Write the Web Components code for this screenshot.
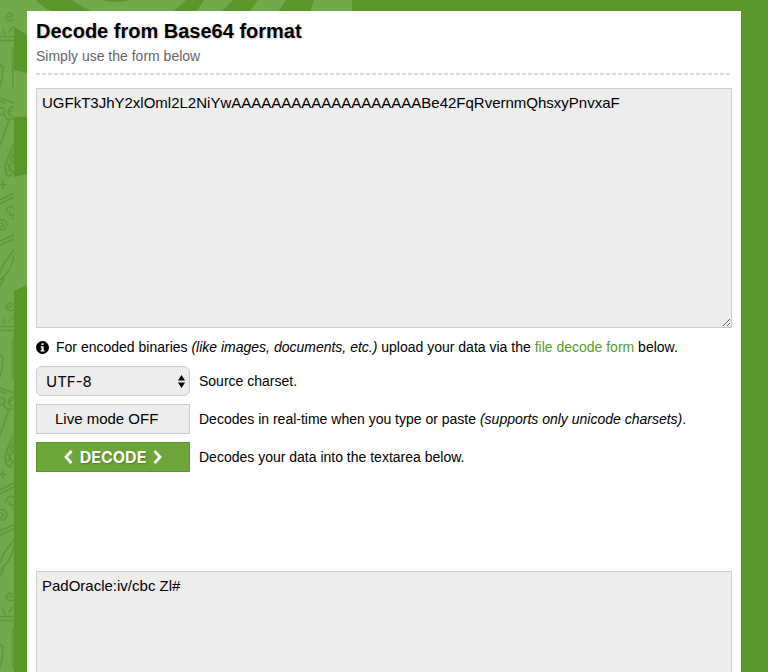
<!DOCTYPE html>
<html lang="en">
<head>
  <meta charset="UTF-8">
  <meta name="viewport" content="width=device-width, initial-scale=1.0">
  <title>Decode from Base64 format</title>
  <style>
    body {
      margin: 0;
      background: #5a962a;
      color: #000;
      font: 14px/18px "Liberation Sans", Arial, sans-serif;
    }
  </style>
</head>
<body>
  <page-shell>
    <decode-header title="Decode from Base64 format" subtitle="Simply use the form below"></decode-header>
    <text-box name="input" label="Data to decode" value="UGFkT3JhY2xlOml2L2NiYwAAAAAAAAAAAAAAAAAAABe42FqRvernmQhsxyPnvxaF"></text-box>
    <info-note>For encoded binaries <i>(like images, documents, etc.)</i> upload your data via the <a slot="link" href="#file">file decode form</a></info-note>
    <decode-options></decode-options>
    <text-box name="output" label="Decoded data" value="PadOracle:iv/cbc Zl#"></text-box>
  </page-shell>

  <script>
    class BackgroundArt extends HTMLElement {
      constructor() {
        super();
        this.attachShadow({mode: 'open'});
      }
      connectedCallback() {
        this.shadowRoot.innerHTML = `
          <style>
            :host { position: absolute; inset: 0; overflow: hidden; z-index: -1; }
            svg { display: block; width: 100%; height: 100%; }
          </style>
          <svg aria-hidden="true">
            <defs>
              <pattern id="doodles" width="14" height="290" patternUnits="userSpaceOnUse">
                <rect width="14" height="290" fill="#73a84d"/>
                <g fill="none" stroke="#61993a" stroke-width="1.7" stroke-linecap="round">
                  <path d="M13 20C8 22 5 18 7 15s7-2 5 1l-3 1M3 29l2 5M13 27l-4 5M0 36.500h14M0 40.500h14M12.700 48v40"/>
                  <path d="M0 65l3 2-1 12-2 8M0 98l14 5M0 101l5 2M14 107c-6-1-8 8-2 9M12 110l-3 2M0 108c5-1 6 4 3 6l-3 1M3 114l4 5h7"/>
                  <path d="M9 120L0 145M13 145l-5 12-3 10 1 7 4 3 3-5-4-5 4-4-3-5 4-4M8 164l3 5-4 2"/>
                  <path d="M3 181v7M0 184.500h6M0 200l14-7M0 204l14-7M6 212c1-8 10-7 9 0-1 5-7 4-5 0M0 220c8-3 9 10 2 10l-2-1M1 223c4 1 2 4 0 4M13 218v1M0 241l14-6M0 245l14-6"/>
                  <path d="M14 250L4 263l-4 10M14 255c-1 9-5 18-14 25M0 286l4-8"/>
                </g>
                <path d="M10 151l4-5v17l-3-1-3 3z" fill="#61993a" opacity=".5"/>
              </pattern>
            </defs>
            <g fill="#73a84d">
              <path d="M0 0h36q8 10 27 15H27v20L14 27H0z"/>
              <path d="M14 70l13 3v44H14zM14 177l13-3v111l-13 6z"/>
              <path d="M72 0q10 8 30 15h65q12-7 19-15zM204 0h29l-15 15h-24zM258 0h28l-10 15h-29zM314 0h38v15h-43z"/>
            </g>
            <path d="M101 0h30q-15 4-30 0z" fill="#5a962a"/>
            <rect width="14" height="100%" fill="url(#doodles)"/>
          </svg>
        `;
      }
    }

    class PageShell extends HTMLElement {
      constructor() {
        super();
        this.attachShadow({mode: 'open'});
      }
      connectedCallback() {
        this.shadowRoot.innerHTML = `
          <style>
            :host { display: block; position: relative; isolation: isolate; padding: 11px 27px 0; }
            main { background: #fff; padding: 7px 9px; }
          </style>
          <background-art></background-art>
          <main><slot></slot></main>
        `;
      }
    }

    class DecodeHeader extends HTMLElement {
      constructor() {
        super();
        this.attachShadow({mode: 'open'});
      }
      connectedCallback() {
        this.shadowRoot.innerHTML = `
          <style>
            :host { display: block; margin-bottom: 13px; }
            h1 { margin: 0; font-size: 20px; line-height: 26px; text-shadow: 1px 1px 2px #ccc; }
            p { margin: 3px 0 8px; color: #666; }
            hr { margin: 0; border: 0; height: 2px;
              background: repeating-linear-gradient(90deg, #ddd 0 4px, transparent 4px 6px); }
          </style>
          <h1>${this.getAttribute('title')}</h1>
          <p>${this.getAttribute('subtitle')}</p>
          <hr>
        `;
      }
    }

    class TextBox extends HTMLElement {
      constructor() {
        super();
        this.attachShadow({mode: 'open'});
      }
      connectedCallback() {
        this.shadowRoot.innerHTML = `
          <style>
            :host { display: block; }
            textarea {
              display: block;
              box-sizing: border-box;
              width: 100%;
              height: 240px;
              margin: 0;
              padding: 5px;
              border: 1px solid #ccc;
              border-radius: 0;
              background: #ededed;
              color: #000;
              font: 15px/18px "Liberation Sans", Arial, sans-serif;
              resize: vertical;
            }
          </style>
          <textarea spellcheck="false" name="${this.getAttribute('name')}" aria-label="${this.getAttribute('label')}">${this.getAttribute('value')}</textarea>
        `;
      }
    }

    class InfoNote extends HTMLElement {
      constructor() {
        super();
        this.attachShadow({mode: 'open'});
      }
      connectedCallback() {
        this.shadowRoot.innerHTML = `
          <style>
            :host { display: flex; gap: 7px; align-items: center; margin: 10px 0; }
            svg { flex: none; }
            ::slotted(a) { color: #5a9a2a; text-decoration: none; }
          </style>
          <svg width="13" height="13" viewBox="0 0 13 13" aria-hidden="true">
            <circle cx="6.5" cy="6.5" r="6.5"/>
            <path d="M5.500 2.200h2v1.800h-2zM4.700 5.200h2.900v4h.9v1.400H4.600V9.200h.9V6.600h-.8z" fill="#fff"/>
          </svg>
          <span><slot></slot><slot name="link"></slot> below.</span>
        `;
      }
    }

    class DecodeOptions extends HTMLElement {
      constructor() {
        super();
        this.attachShadow({mode: 'open'});
      }
      connectedCallback() {
        this.shadowRoot.innerHTML = `
          <style>
            :host {
              display: grid;
              grid-template-columns: 154px 1fr;
              gap: 8px 9px;
              align-items: center;
              margin-bottom: 99px;
            }
            .select { display: grid; align-items: center; }
            .select > * { grid-area: 1 / 1; }
            .select svg { justify-self: end; margin-right: 5px; pointer-events: none; }
            select, button {
              box-sizing: border-box;
              width: 100%;
              height: 30px;
              margin: 0;
              border: 1px solid #ccc;
              background: #ededed;
              color: #000;
              font: 15px "Liberation Sans", Arial, sans-serif;
            }
            select { appearance: none; border-radius: 6px; padding: 0 9px; font-family: Inter, sans-serif; }
            .live { text-align: left; padding: 0 18px 2px; }
            .decode {
              display: flex;
              align-items: center;
              justify-content: center;
              gap: 7px;
              border-color: #5a962a;
              background: #6fa63c;
              color: #fff;
              font: bold 16px Inter, sans-serif;
              text-shadow: 1px 1px 2px #4b7d24;
            }
          </style>
          <div class="select">
            <select id="charset"><option>UTF-8</option><option>ASCII</option></select>
            <svg width="7" height="13" viewBox="0 0 7 13" aria-hidden="true"><path d="M3.500 0L7 5.500H0zM3.500 13L7 7.500H0z"/></svg>
          </div>
          <label for="charset">Source charset.</label>
          <button class="live" type="button" aria-describedby="live-text">Live mode OFF</button>
          <span id="live-text">Decodes in real-time when you type or paste <i>(supports only unicode charsets)</i>.</span>
          <button class="decode" type="button" aria-describedby="decode-text">
            <svg width="9" height="14" viewBox="0 0 9 14" fill="none" stroke="#fff" stroke-width="2.8" aria-hidden="true"><path d="M7.500 1L2 7l5.500 6"/></svg>
            DECODE
            <svg width="9" height="14" viewBox="0 0 9 14" fill="none" stroke="#fff" stroke-width="2.8" aria-hidden="true"><path d="M1.500 1L7 7l-5.500 6"/></svg>
          </button>
          <span id="decode-text">Decodes your data into the textarea below.</span>
        `;
      }
    }

    customElements.define('background-art', BackgroundArt);
    customElements.define('page-shell', PageShell);
    customElements.define('decode-header', DecodeHeader);
    customElements.define('text-box', TextBox);
    customElements.define('info-note', InfoNote);
    customElements.define('decode-options', DecodeOptions);
  </script>
</body>
</html>
